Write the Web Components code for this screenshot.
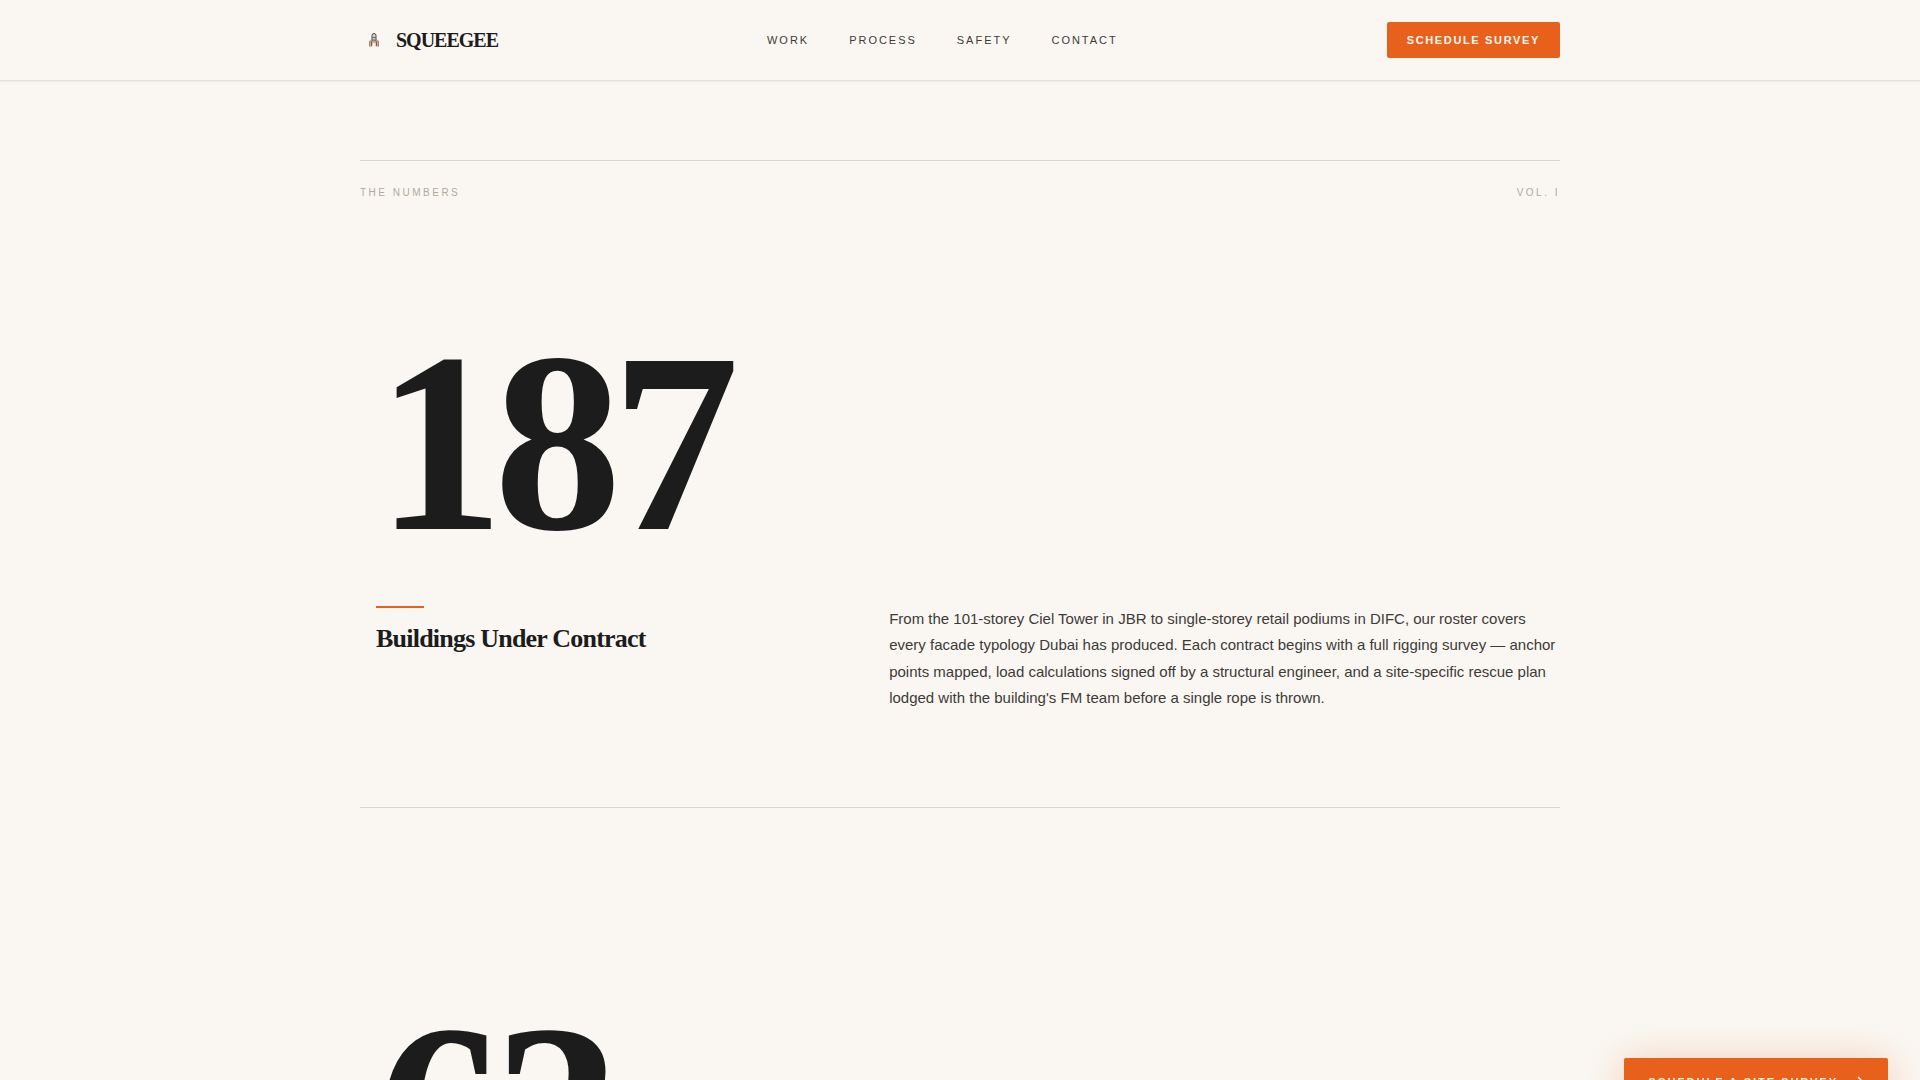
<!DOCTYPE html>
<html lang="en">
<head>
<meta charset="utf-8">
<meta name="viewport" content="width=device-width, initial-scale=1">
<title>Squeegee</title>
<style>
  :root {
    --paper: #faf7f2;
    --ink: #1c1c1c;
    --body: #3d3b38;
    --muted: #b0aa9e;
    --rule: #d9d7d2;
    --orange: #e8611c;
    --serif: "Liberation Serif", "Times New Roman", serif;
    --sans: "Liberation Sans", Arial, sans-serif;
  }
  body {
    margin: 0;
    height: 100vh;
    overflow: hidden;
    background: var(--paper);
    color: var(--ink);
    font-family: var(--sans);
  }
</style>
</head>
<body>
  <site-header>
    <nav-link href="#work">WORK</nav-link>
    <nav-link href="#process">PROCESS</nav-link>
    <nav-link href="#safety">SAFETY</nav-link>
    <nav-link href="#contact">CONTACT</nav-link>
  </site-header>
  <numbers-section>
    <span slot="title">THE NUMBERS</span>
    <span slot="volume">VOL. I</span>
    <stat-block number="187" heading="Buildings Under Contract">
      From the 101-storey Ciel Tower in JBR to single-storey retail podiums in DIFC, our roster covers every facade typology Dubai has produced. Each contract begins with a full rigging survey — anchor points mapped, load calculations signed off by a structural engineer, and a site-specific rescue plan lodged with the building's FM team before a single rope is thrown.
    </stat-block>
    <stat-block number="63"></stat-block>
  </numbers-section>
  <floating-cta>SCHEDULE A SITE SURVEY</floating-cta>

<script>
  class SiteHeader extends HTMLElement {
    constructor() {
      super();
      this.attachShadow({ mode: "open" });
    }
    getTemplate() {
      const template = document.createElement("template");
      template.innerHTML = `
        <header>
          <div class="inner">
            <a class="brand" href="#top">
              <svg viewBox="0 0 28 28" width="28" height="28" aria-hidden="true">
                <path d="M9 15l2-1.500h6l2 1.500v5.500h-3.500v-3q-1.500-1.500-3 0v3H9z" fill="#c9a594"/>
                <path d="M9.500 15.500v5M18.500 15.500v5" stroke="#a98675" stroke-width="1"/>
                <path d="M12 14V9.500Q12 7.500 14 7.500T16 9.500V14" fill="#d3cfc9" stroke="#4c4f54" stroke-width="1"/>
                <path d="M11.500 20v-4l1-2h3l1 2v4M12 11.500h4" fill="none" stroke="#75655e" stroke-width="1"/>
              </svg>
              <span>SQUEEGEE</span>
            </a>
            <nav aria-label="Main"><slot></slot></nav>
            <div class="action"><button type="button">SCHEDULE SURVEY</button></div>
          </div>
        </header>
        ${this.getStyles()}
      `;
      return template;
    }
    getStyles() {
      return `
        <style>
        :host {
          display: block;
        }
        header {
          background: var(--paper);
          border-bottom: 1px solid #e5e2dd;
          box-shadow: 0 1px 1px rgba(28, 28, 27, 0.05);
        }
        .inner {
          display: flex;
          align-items: center;
          justify-content: space-between;
          max-width: 1200px;
          height: 80px;
          margin: 0 auto;
        }
        .brand {
          display: flex;
          align-items: center;
          gap: 8px;
          color: var(--ink);
          font: bold 20px/24px var(--serif);
          letter-spacing: -1px;
          text-decoration: none;
        }
        nav {
          display: flex;
          gap: 40px;
        }
        button {
          height: 36px;
          padding: 0 20px;
          border: 0;
          border-radius: 2px;
          background: var(--orange);
          color: var(--paper);
          font: bold 11px/16px var(--sans);
          letter-spacing: 0.15em;
        }
        </style>
      `;
    }
    connectedCallback() {
      this.shadowRoot.appendChild(this.getTemplate().content.cloneNode(true));
    }
  }
  customElements.define("site-header", SiteHeader);

  class NavLink extends HTMLElement {
    constructor() {
      super();
      this.attachShadow({ mode: "open" });
    }
    connectedCallback() {
      this.shadowRoot.innerHTML = `
        <a href="${this.getAttribute("href")}"><slot></slot></a>
        <style>
        :host {
          display: block;
        }
        a {
          display: block;
          color: var(--body);
          font: 11px/16px var(--sans);
          letter-spacing: 0.18em;
          text-decoration: none;
        }
        </style>
      `;
    }
  }
  customElements.define("nav-link", NavLink);

  class NumbersSection extends HTMLElement {
    constructor() {
      super();
      this.attachShadow({ mode: "open" });
    }
    connectedCallback() {
      this.shadowRoot.innerHTML = `
        <section>
          <div class="bar">
            <slot name="title"></slot>
            <slot name="volume"></slot>
          </div>
          <slot></slot>
        </section>
        <style>
        :host {
          display: block;
        }
        section {
          max-width: 1200px;
          margin: 0 auto;
          padding-top: 79px;
        }
        .bar {
          display: flex;
          justify-content: space-between;
          padding-top: 24px;
          border-top: 1px solid var(--rule);
          color: var(--muted);
          font: 10px/15px var(--sans);
          letter-spacing: 0.25em;
        }
        </style>
      `;
    }
  }
  customElements.define("numbers-section", NumbersSection);

  class StatBlock extends HTMLElement {
    constructor() {
      super();
      this.attachShadow({ mode: "open" });
    }
    getStyles() {
      return `
        <style>
        :host {
          display: block;
          padding: 128px 0 96px;
          border-bottom: 1px solid var(--rule);
        }
        :host(:last-of-type) {
          padding-top: 192px;
          border-bottom: 0;
        }
        .number {
          padding-left: 16px;
          color: var(--ink);
          font: bold 256px/230px var(--serif);
          letter-spacing: -0.04em;
        }
        .details {
          display: grid;
          grid-template-columns: 5fr 7fr;
          gap: 50px;
          margin-top: 48px;
        }
        .heading {
          padding-left: 16px;
        }
        .heading::before {
          content: "";
          display: block;
          width: 48px;
          height: 2px;
          margin-bottom: 16px;
          background: var(--orange);
        }
        h2 {
          margin: 0;
          font: bold 26px/30px var(--serif);
          letter-spacing: -0.03em;
        }
        p {
          margin: 0;
          color: var(--body);
          font: 15px/1.75 var(--sans);
        }
        </style>
      `;
    }
    connectedCallback() {
      const heading = this.getAttribute("heading");
      const details = heading ? `
          <div class="details">
            <div class="heading"><h2>${heading}</h2></div>
            <p><slot></slot></p>
          </div>` : "";
      this.shadowRoot.innerHTML = `
        <article>
          <div class="number">${this.getAttribute("number")}</div>
          ${details}
        </article>
        ${this.getStyles()}
      `;
    }
  }
  customElements.define("stat-block", StatBlock);

  class FloatingCta extends HTMLElement {
    constructor() {
      super();
      this.attachShadow({ mode: "open" });
    }
    connectedCallback() {
      this.shadowRoot.innerHTML = `
        <button type="button">
          <slot></slot>
          <svg viewBox="0 0 14 14" width="14" height="14" fill="none" stroke="currentColor" stroke-width="1.500" aria-hidden="true">
            <path d="M1 7h12M8 2l5 5-5 5"/>
          </svg>
        </button>
        <style>
        :host {
          position: fixed;
          right: 32px;
          bottom: -26px;
        }
        button {
          display: flex;
          align-items: center;
          gap: 12px;
          height: 48px;
          padding: 0 24px;
          border: 0;
          border-radius: 2px;
          background: var(--orange);
          box-shadow: 0 4px 40px rgba(232, 97, 28, 0.3);
          color: var(--paper);
          font: bold 11px/16px var(--sans);
          letter-spacing: 0.18em;
        }
        </style>
      `;
    }
  }
  customElements.define("floating-cta", FloatingCta);
</script>
</body>
</html>
